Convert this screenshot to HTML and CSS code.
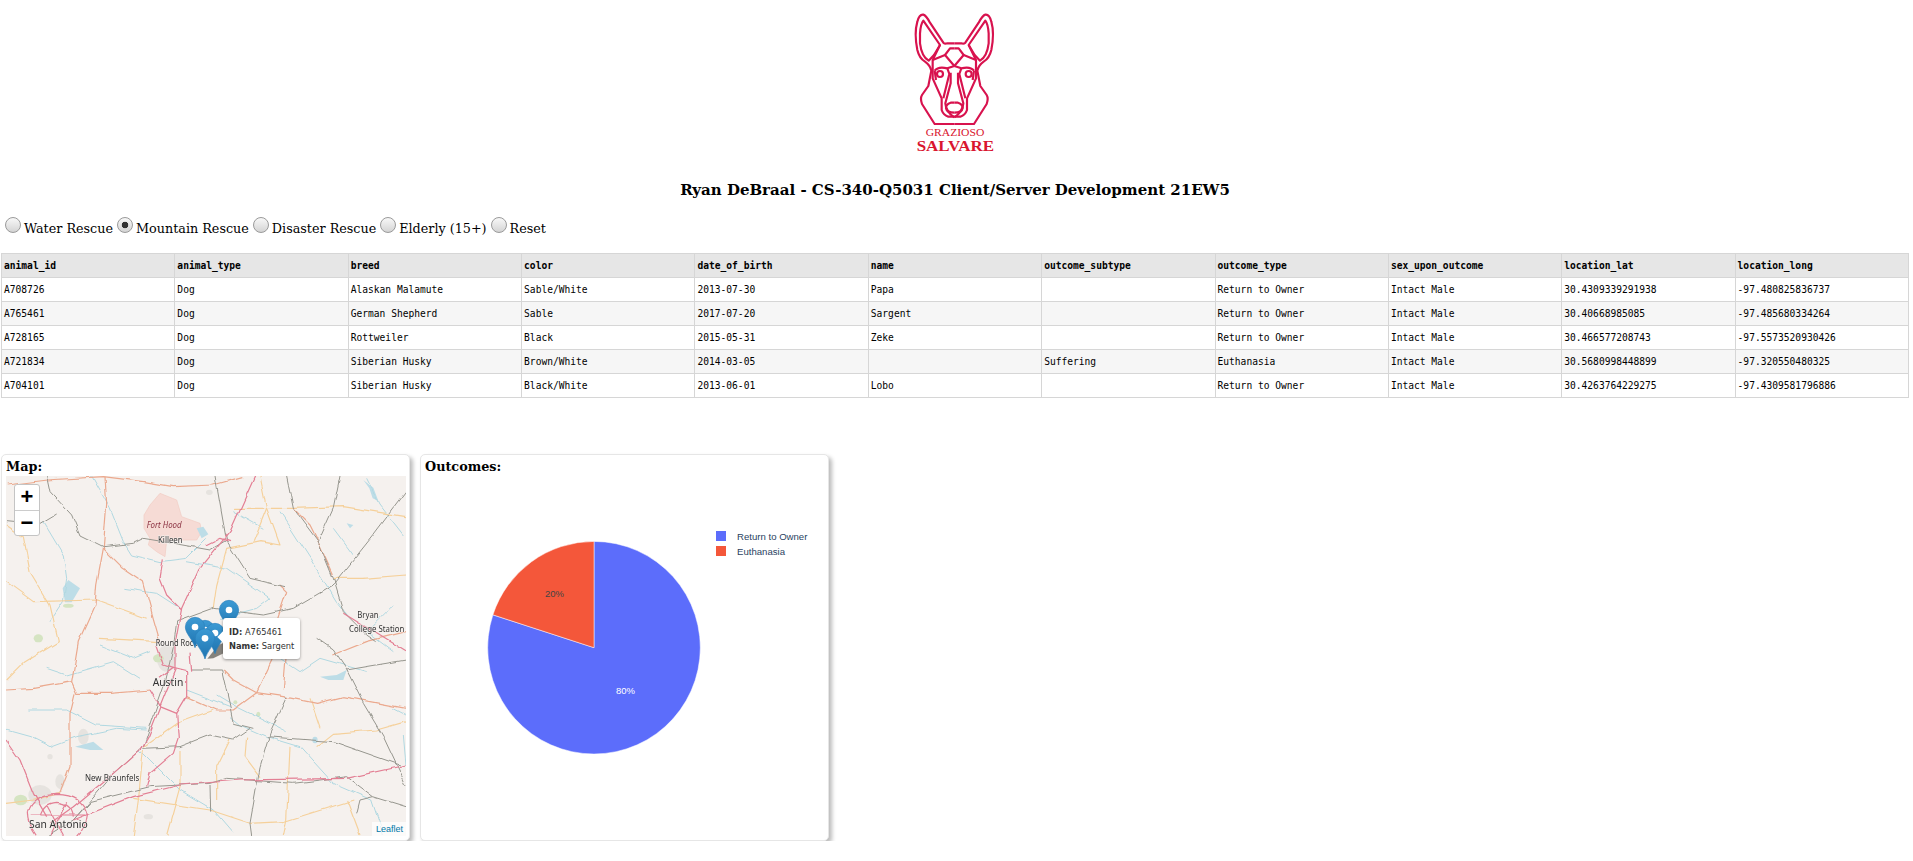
FILE: index.html
```html
<!DOCTYPE html>
<html lang="en">
<head>
  <meta charset="UTF-8">
  <title>Dash</title>
  <link rel="stylesheet" href="styles.css">
</head>
<body>
  <!-- Logo -->
  <div class="logo-row">
    <svg class="logo" viewBox="0 0 600 495" width="200" height="165">
      <g id="dogHalf" class="dog">
        <path d="M283 372H224L186 312Q180 295 186 285L205 258L214 212Q210 195 195 185Q178 175 172 150Q162 100 172 65Q178 42 190 44Q198 46 210 68L250 128Q255 133 262 130H283"/>
        <path d="M180 100Q182 72 190 62L240 135L222 165L206 182Q185 170 180 130Z"/>
        <path d="M283 145H270L255 165L283 198"/>
        <path d="M240 135L218 180V235L245 295V330Q250 345 265 350H283"/>
        <path d="M218 180L255 165"/>
        <path d="M224 212Q235 198 262 205L283 198M262 205L268 222L250 295M224 212L228 240"/>
        <circle cx="240" cy="222" r="9"/>
        <path d="M272 218V250L256 310Q258 335 283 352"/>
        <path d="M283 308H272Q258 312 258 324Q260 338 283 338"/>
      </g>
      <use href="#dogHalf" transform="translate(566 0) scale(-1 1)"/>
      <text class="logo-small" x="197" y="407" textLength="176" lengthAdjust="spacingAndGlyphs">GRAZIOSO</text>
      <text class="logo-big" x="170" y="453" textLength="232" lengthAdjust="spacingAndGlyphs">SALVARE</text>
    </svg>
  </div>

  <h3 class="titulo">Ryan DeBraal - CS-340-Q5031 Client/Server Development 21EW5</h3>

  <!-- Filtros -->
  <div class="filtros">
    <label><input type="radio" name="filtro">Water Rescue</label>
    <label><input type="radio" name="filtro" checked>Mountain Rescue</label>
    <label><input type="radio" name="filtro">Disaster Rescue</label>
    <label><input type="radio" name="filtro">Elderly (15+)</label>
    <label><input type="radio" name="filtro">Reset</label>
  </div>

  <!-- Tabela -->
  <div class="tabela-wrap">
    <table class="tabela">
      <thead>
        <tr>
          <th>animal_id</th><th>animal_type</th><th>breed</th><th>color</th><th>date_of_birth</th><th>name</th><th>outcome_subtype</th><th>outcome_type</th><th>sex_upon_outcome</th><th>location_lat</th><th>location_long</th>
        </tr>
      </thead>
      <tbody>
        <tr><td>A708726</td><td>Dog</td><td>Alaskan Malamute</td><td>Sable/White</td><td>2013-07-30</td><td>Papa</td><td></td><td>Return to Owner</td><td>Intact Male</td><td>30.4309339291938</td><td>-97.480825836737</td></tr>
        <tr><td>A765461</td><td>Dog</td><td>German Shepherd</td><td>Sable</td><td>2017-07-20</td><td>Sargent</td><td></td><td>Return to Owner</td><td>Intact Male</td><td>30.40668985085</td><td>-97.485680334264</td></tr>
        <tr><td>A728165</td><td>Dog</td><td>Rottweiler</td><td>Black</td><td>2015-05-31</td><td>Zeke</td><td></td><td>Return to Owner</td><td>Intact Male</td><td>30.466577208743</td><td>-97.5573520930426</td></tr>
        <tr><td>A721834</td><td>Dog</td><td>Siberian Husky</td><td>Brown/White</td><td>2014-03-05</td><td></td><td>Suffering</td><td>Euthanasia</td><td>Intact Male</td><td>30.5680998448899</td><td>-97.320550480325</td></tr>
        <tr><td>A704101</td><td>Dog</td><td>Siberian Husky</td><td>Black/White</td><td>2013-06-01</td><td>Lobo</td><td></td><td>Return to Owner</td><td>Intact Male</td><td>30.4263764229275</td><td>-97.4309581796886</td></tr>
      </tbody>
    </table>
  </div>

  <!-- Mapa e grafico -->
  <div class="paineis">
    <div class="painel">
      <h4>Map:</h4>
      <div class="mapa">
        <svg class="mapa-fundo" viewBox="18 93 1200 1080" width="400" height="360">
          <defs>
            <filter id="ondula" x="0" y="0" width="1300" height="1300" filterUnits="userSpaceOnUse" primitiveUnits="userSpaceOnUse" color-interpolation-filters="sRGB">
              <feTurbulence type="fractalNoise" baseFrequency=".02" numOctaves="2" seed="4"/>
              <feDisplacementMap in="SourceGraphic" scale="14" xChannelSelector="R" yChannelSelector="G"/>
            </filter>
            <linearGradient id="pinCor" x1="0" y1="0" x2="0" y2="1">
              <stop offset="0" stop-color="#3c9ad4"/>
              <stop offset="1" stop-color="#1f74b0"/>
            </linearGradient>
            <g id="pin">
              <path fill="url(#pinCor)" stroke="#2a80bc" stroke-width="2" d="M0 62C-6 38-29 20-29 0A29 29 0 0 1 29 0C29 20 6 38 0 62Z"/>
              <circle r="10" fill="#fff"/>
            </g>
          </defs>
          <rect x="18" y="93" width="1200" height="1080" fill="#f5f1ee"/>
          <!-- areas -->
          <path fill="#f6dbd5" stroke="#f1cbc3" stroke-width="2" d="M480 145L530 165L545 215L600 235L605 260L590 285L500 285L495 335L470 320L445 300L450 280L432 250L432 210L450 180Z"/>
          <g fill="#e6e3df">
            <ellipse cx="250" cy="875" rx="16" ry="24"/>
            <ellipse cx="180" cy="1010" rx="14" ry="22"/>
            <ellipse cx="120" cy="1050" rx="35" ry="30"/>
            <ellipse cx="150" cy="935" rx="8" ry="8"/>
            <ellipse cx="445" cy="1115" rx="14" ry="8"/>
            <ellipse cx="500" cy="640" rx="30" ry="40"/>
            <ellipse cx="628" cy="142" rx="10" ry="8"/>
          </g>
          <g fill="#d5e4c2">
            <ellipse cx="62" cy="1065" rx="20" ry="16"/>
            <ellipse cx="475" cy="640" rx="16" ry="12"/>
            <ellipse cx="205" cy="482" rx="16" ry="6"/>
            <ellipse cx="115" cy="580" rx="14" ry="12"/>
            <ellipse cx="775" cy="808" rx="6" ry="8"/>
            <ellipse cx="706" cy="772" rx="6" ry="6"/>
          </g>
          <g fill="#bddde7">
            <path d="M205 405L240 430L215 472H195L188 430Z"/>
            <path d="M1090 105L1120 128L1135 168L1118 160L1108 130Z"/>
            <path d="M1040 235L1060 240L1050 250Z"/>
            <path d="M590 250L610 245L625 268L605 280Z"/>
            <path d="M960 695L1010 690L1040 675L1030 705L985 705Z"/>
            <path d="M225 905L280 890L310 915L270 915Z"/>
            <ellipse cx="945" cy="885" rx="8" ry="10"/>
          </g>
          <g filter="url(#ondula)">
            <!-- rios -->
            <g class="linhas rio">
              <path d="M275 93L330 190L370 290L395 330L480 350L560 340L620 280"/>
              <path d="M130 230L190 330L200 400L190 470L150 530"/>
              <path d="M560 350L680 370L810 460L770 490L660 520"/>
              <path d="M840 200L930 340L1010 470L1050 520"/>
              <path d="M1100 100L1140 180L1210 270"/>
              <path d="M370 430L470 445L540 490"/>
              <path d="M18 855L90 875L150 905L230 875L350 850L440 855"/>
              <path d="M85 795L200 795L290 840L440 850"/>
              <path d="M560 735L690 785"/>
              <path d="M690 815L720 840L800 875L900 905L1000 1015L1115 1065L1150 1170"/>
              <path d="M420 915L540 1035L640 1095L700 1165"/>
              <path d="M1180 790L1218 810M1210 870L1218 960"/>
              <path d="M300 600L400 640L450 620"/>
              <path d="M140 670L200 690L340 650L420 700"/>
              <path d="M780 600L900 680L960 640L1100 680"/>
              <path d="M650 750L700 780L860 860"/>
              <path d="M790 250L700 200M1000 250L1060 330"/>
              <path d="M1180 620L1100 560L1180 480"/>
            </g>
            <!-- estradas secundarias -->
            <g class="linhas amarela">
              <path d="M70 275L90 380L150 480L175 590L70 655L20 705"/>
              <path d="M18 410L100 470L290 465L440 520"/>
              <path d="M780 93L800 190L840 300L780 290L680 310L650 420L640 490"/>
              <path d="M700 190L880 190L1030 185L1218 215"/>
              <path d="M1000 400L1090 400L1218 390"/>
              <path d="M430 915L415 1065L400 1173"/>
              <path d="M540 915L540 1025L500 1170"/>
              <path d="M690 885L650 965L650 1065"/>
              <path d="M740 875L735 935L780 995"/>
              <path d="M870 905L860 1125L850 1173"/>
              <path d="M1218 830L1130 855L1000 865L950 905"/>
              <path d="M640 795L530 835L430 905"/>
              <path d="M18 1075L100 1065L180 1045"/>
              <path d="M400 1060L630 1095L750 1135L850 1130L1060 1065"/>
              <path d="M300 580L480 590"/>
              <path d="M800 190L760 290"/>
              <path d="M1040 1065L1080 1170"/>
              <path d="M930 760L960 850"/>
              <path d="M18 240L70 275"/>
            </g>
            <!-- estradas principais -->
            <g class="linhas laranja">
              <path d="M20 120L140 105L310 95L430 110L520 125L640 120L730 95"/>
              <path d="M315 95L320 180L310 310L290 420L285 480L235 590L215 710"/>
              <path d="M310 310L370 370L430 410L460 520L480 590"/>
              <path d="M880 190L930 240L960 300L1000 390"/>
              <path d="M18 735L100 730L215 710L230 745L330 745L450 735"/>
              <path d="M225 745L210 805L210 965L180 1045"/>
              <path d="M560 755L650 795L700 795L770 743L850 755L950 775L1030 755L1218 790"/>
              <path d="M670 675L700 705L770 743L830 615"/>
              <path d="M850 735L860 615"/>
              <path d="M840 420L860 440L830 530"/>
              <path d="M1000 630L1100 590L1218 560"/>
            </g>
            <!-- ferrovias -->
            <g class="linhas cinza">
              <path d="M140 93L150 140L215 210L240 270L310 305L400 295L430 280L520 295L630 315L680 285"/>
              <path d="M18 230L120 240L170 210"/>
              <path d="M645 93L680 290L750 400L855 425"/>
              <path d="M860 93L880 190L955 290L1000 400L1030 500L1100 570L1130 590"/>
              <path d="M1020 93L1000 190L955 290"/>
              <path d="M1218 140L1120 270L1000 420L880 490L790 510L640 490L530 530L520 610L495 715L460 815L430 905L340 985L220 1125L140 1173"/>
              <path d="M575 675L665 675L690 785L700 835L760 850"/>
              <path d="M430 910L540 905L630 870L700 885L750 850"/>
              <path d="M950 580L1000 615L1040 675L1090 775L1150 875L1218 1020"/>
              <path d="M1040 675L1218 645"/>
              <path d="M860 755L810 865L780 965L750 1135L755 1173"/>
              <path d="M450 1025L270 1070L220 1125"/>
              <path d="M450 1025L630 1015L680 1000L880 1015L1040 995L1120 1055L1218 1085"/>
              <path d="M800 875L1000 890L1200 960"/>
              <path d="M1120 1055L1080 1065L1070 1105"/>
              <path d="M630 1020L632 1100"/>
            </g>
            <!-- interestaduais -->
            <g class="linhas rosa">
              <path d="M765 93L690 260L600 370L545 490L525 600L525 675L500 735L480 785L445 875L425 910L340 985L220 1085L150 1135"/>
              <path d="M220 1125L400 1055L540 1020L720 1005L1040 1000L1218 960"/>
              <path d="M18 885L60 945L100 1045L140 1115"/>
              <path d="M490 340L480 400L500 450L545 495"/>
              <path d="M530 805L535 880L520 925L450 985L440 1025"/>
              <path d="M450 735L480 785L530 805L560 755L560 680L520 670L480 700"/>
              <path d="M470 600L490 660L520 670M570 620L575 680"/>
              <path d="M1030 505L1218 620"/>
              <path d="M620 300L660 280L690 290"/>
              <path d="M85 1100Q100 1050 170 1048Q250 1050 262 1110Q258 1150 230 1173M85 1100Q85 1140 110 1173"/>
              <path d="M120 1115Q130 1075 170 1072Q215 1075 220 1115M140 1080L190 1173M200 1072L150 1173M95 1110H255"/>
            </g>
          </g>
          <!-- rotulos -->
          <text class="rotulo-hood" x="440" y="250" textLength="105" lengthAdjust="spacingAndGlyphs">Fort Hood</text>
          <text class="rotulo" x="474" y="294" font-size="24" textLength="74" lengthAdjust="spacingAndGlyphs">Killeen</text>
          <text class="rotulo" x="1072" y="520" font-size="24" textLength="64" lengthAdjust="spacingAndGlyphs">Bryan</text>
          <text class="rotulo" x="1047" y="560" font-size="24" textLength="166" lengthAdjust="spacingAndGlyphs">College Station</text>
          <text class="rotulo" x="467" y="604" font-size="24" textLength="125" lengthAdjust="spacingAndGlyphs">Round Rock</text>
          <text class="rotulo" x="458" y="723" font-size="31" textLength="92" lengthAdjust="spacingAndGlyphs">Austin</text>
          <text class="rotulo" x="255" y="1007" font-size="24" textLength="163" lengthAdjust="spacingAndGlyphs">New Braunfels</text>
          <text class="rotulo" x="87" y="1149" font-size="30" textLength="176" lengthAdjust="spacingAndGlyphs">San Antonio</text>
          <!-- marcadores -->
          <path fill="#55534c" opacity=".7" d="M622 641L655 600L680 590L680 620L640 640Z"/>
          <use href="#pin" x="615" y="555"/>
          <use href="#pin" x="645" y="564"/>
          <use href="#pin" x="585" y="546"/>
          <use href="#pin" x="615" y="580"/>
          <use href="#pin" x="687" y="495"/>
        </svg>
        <div class="zoom-ctl">
          <span>+</span>
          <span>&minus;</span>
        </div>
        <div class="popup">
          <div><b>ID:</b> A765461</div>
          <div><b>Name:</b> Sargent</div>
        </div>
        <div class="atrib">Leaflet</div>
      </div>
    </div>

    <div class="painel">
      <h4>Outcomes:</h4>
      <svg class="grafico" viewBox="0 0 400 345" width="400" height="345">
        <g transform="translate(169 171.7)">
          <path fill="#5c6dfb" stroke="#fff" stroke-width=".5" d="M0 0V-106.3A106.3 106.3 0 1 1 -101.1 -32.85Z"/>
          <path fill="#f4573a" stroke="#fff" stroke-width=".5" d="M0 0L-101.1 -32.85A106.3 106.3 0 0 1 0 -106.3Z"/>
          <text class="pct pct-escuro" x="-39.5" y="-51">20%</text>
          <text class="pct pct-claro" x="31.5" y="46">80%</text>
        </g>
        <rect x="291" y="55" width="10" height="10" fill="#5c6dfb"/>
        <rect x="291" y="70" width="10" height="10" fill="#f4573a"/>
        <text class="legenda" x="312" y="63.5">Return to Owner</text>
        <text class="legenda" x="312" y="79">Euthanasia</text>
      </svg>
    </div>
  </div>
</body>
</html>
```

FILE: styles.css
```css
body {
  margin: 0;
  background: #fff;
  color: #000;
  font-family: "DejaVu Serif", serif;
}

.logo-row {
  display: flex;
  justify-content: center;
  height: 165px;
}

.logo {
  margin-left: 7px;
}

.dog path,
.dog circle {
  fill: none;
  stroke: #d8124e;
  stroke-width: 6.5;
  stroke-linejoin: round;
}

.logo use {
  fill: none;
}

.logo-small,
.logo-big {
  font-family: "Liberation Serif", serif;
  fill: #d9152f;
}

.logo-small {
  font-size: 28px;
}

.logo-big {
  font-size: 46px;
  font-weight: bold;
}

.titulo {
  margin: 16px 0 0;
  padding-right: 3px;
  height: 19px;
  line-height: 19px;
  font-size: 15px;
  font-weight: bold;
  text-align: center;
}

.filtros {
  display: flex;
  gap: 4px;
  margin-top: 17px;
  padding-left: 5px;
  height: 20px;
  font-size: 12.75px;
}

.filtros label {
  display: flex;
  align-items: flex-start;
  line-height: 24px;
}

.filtros input {
  appearance: none;
  width: 16px;
  height: 16px;
  margin: 0 3px 0 0;
  border: 1px solid #9a9a9a;
  border-radius: 50%;
  background: linear-gradient(#f8f8f8, #d4d4d4);
}

.filtros input:checked {
  background: radial-gradient(circle, #333 0 3px, transparent 3.6px), linear-gradient(#f8f8f8, #d4d4d4);
}

.tabela-wrap {
  margin-top: 16px;
  padding: 0 4px 0 1px;
}

.tabela {
  width: 100%;
  table-layout: fixed;
  border-collapse: collapse;
  font-family: "DejaVu Sans Mono", monospace;
  font-size: 9.6px;
}

.tabela th,
.tabela td {
  height: 24px;
  padding: 0 2px;
  border: 1px solid #d6d6d6;
  text-align: left;
  box-sizing: border-box;
  white-space: nowrap;
}

.tabela th {
  background: #e6e6e6;
}

.tabela tbody tr:nth-child(even) {
  background: #f6f6f6;
}

.paineis {
  display: flex;
  gap: 10px;
  margin-top: 56px;
  padding-left: 1px;
}

.painel {
  box-sizing: border-box;
  width: 409px;
  height: 387px;
  padding: 4px;
  background: #fff;
  border: 1px solid #e6e6e6;
  border-radius: 5px;
  box-shadow: 3px 3px 4px #bbb;
}

.painel h4 {
  margin: 0;
  height: 17px;
  line-height: 16px;
  font-size: 12.8px;
  font-weight: bold;
}

.mapa {
  position: relative;
  width: 400px;
  height: 360px;
  overflow: hidden;
}

.mapa-fundo {
  display: block;
  filter: blur(.45px);
}

.linhas path {
  fill: none;
  stroke-linejoin: round;
}

.rio path { stroke: #b0d8e1; stroke-width: 3; }
.amarela path { stroke: #f5d09a; stroke-width: 3.4; }
.laranja path { stroke: #eba98e; stroke-width: 3.6; }
.cinza path { stroke: #96968e; stroke-width: 3; }
.rosa path { stroke: #e37f94; stroke-width: 3.6; }

.rotulo {
  font-family: "Noto Sans", sans-serif;
  fill: #333;
  stroke: #f5f1ee;
  stroke-width: 3;
  paint-order: stroke;
}

.rotulo-hood {
  font-family: "Noto Sans", sans-serif;
  font-size: 24px;
  font-style: italic;
  fill: #8a2f3f;
}

.zoom-ctl {
  position: absolute;
  left: 8px;
  top: 8px;
  display: flex;
  flex-direction: column;
  width: 24px;
  border: 1px solid #c4c4c4;
  border-radius: 3px;
  background: #fff;
  font-family: "Liberation Sans", sans-serif;
  font-size: 22px;
  font-weight: bold;
  text-align: center;
}

.zoom-ctl span {
  height: 24.5px;
  line-height: 24px;
}

.zoom-ctl span + span {
  border-top: 1px solid #ccc;
}

.popup {
  position: absolute;
  left: 217px;
  top: 142px;
  box-sizing: border-box;
  width: 77px;
  height: 41px;
  padding: 7px 6px;
  background: #fff;
  border-radius: 3px;
  box-shadow: 0 1px 3px rgba(0, 0, 0, .4);
  font-family: "DejaVu Sans", sans-serif;
  font-size: 8.3px;
  line-height: 14px;
  color: #333;
  white-space: nowrap;
}

.popup::before {
  content: "";
  position: absolute;
  left: -4px;
  top: 15px;
  width: 8px;
  height: 8px;
  background: #fff;
  transform: rotate(45deg);
}

.atrib {
  position: absolute;
  right: 0;
  bottom: 0;
  padding: 0 3px 0 4px;
  background: rgba(255, 255, 255, .7);
  font-family: "Liberation Sans", sans-serif;
  font-size: 9px;
  line-height: 14px;
  color: #0078a8;
}

.grafico {
  display: block;
}

.pct {
  font-family: "Liberation Sans", sans-serif;
  font-size: 9.5px;
  text-anchor: middle;
}

.pct-escuro { fill: #444; }
.pct-claro { fill: #fff; }

.legenda {
  font-family: "Liberation Sans", sans-serif;
  font-size: 9.6px;
  fill: #2a3f5f;
}
```
